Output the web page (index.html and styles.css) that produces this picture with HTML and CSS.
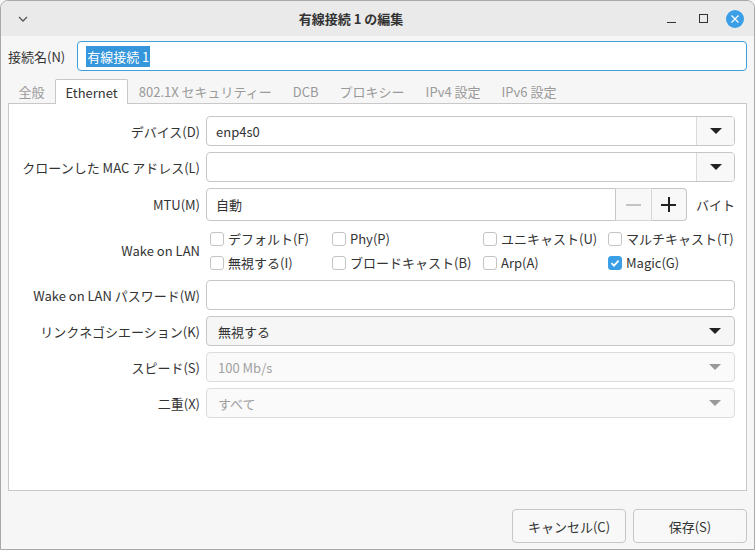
FILE: index.html
```html
<!DOCTYPE html>
<html lang="ja">
<head>
    <meta charset="UTF-8">
    <meta name="viewport" content="width=device-width, initial-scale=1.0">
    <title>有線接続 1 の編集</title>
    <link rel="stylesheet" href="styles.css">
</head>
<body>
    <div class="window">
        <div class="titlebar">
            <div class="tb-left">
                <svg width="10" height="6" viewBox="0 0 10 6"><path d="M1 1 L5 5 L9 1" fill="none" stroke="#555" stroke-width="1.3"/></svg>
            </div>
            <div class="tb-title">有線接続 1 の編集</div>
            <div class="tb-controls">
                <span class="tb-min"></span>
                <span class="tb-max"></span>
                <span class="tb-close">
                    <svg width="18" height="18" viewBox="0 0 18 18"><path d="M5.5 5.5 L12.5 12.5 M12.5 5.5 L5.5 12.5" stroke="#fff" stroke-width="1.2"/></svg>
                </span>
            </div>
        </div>

        <div class="content">
            <div class="name-row">
                <label>接続名(N)</label>
                <div class="entry focused"><span class="selected">有線接続 1</span></div>
            </div>

            <div class="tabs">
                <div class="tab">全般</div>
                <div class="tab active">Ethernet</div>
                <div class="tab">802.1X セキュリティー</div>
                <div class="tab">DCB</div>
                <div class="tab">プロキシー</div>
                <div class="tab">IPv4 設定</div>
                <div class="tab">IPv6 設定</div>
            </div>

            <div class="panel">
                <div class="form">
                    <label class="row-label">デバイス(D)</label>
                    <div class="combo entry-combo">
                        <div class="combo-text">enp4s0</div>
                        <div class="combo-btn"><span class="arrow"></span></div>
                    </div>

                    <label class="row-label">クローンした MAC アドレス(L)</label>
                    <div class="combo entry-combo">
                        <div class="combo-text"></div>
                        <div class="combo-btn"><span class="arrow"></span></div>
                    </div>

                    <label class="row-label">MTU(M)</label>
                    <div class="spin-row">
                        <div class="spin">
                            <div class="spin-text">自動</div>
                            <div class="spin-btn minus"><span></span></div>
                            <div class="spin-btn plus"><span></span><span class="v"></span></div>
                        </div>
                        <span class="unit">バイト</span>
                    </div>

                    <label class="row-label">Wake on LAN</label>
                    <div class="checks">
                        <div class="check"><span class="box"></span>デフォルト(F)</div>
                        <div class="check"><span class="box"></span>Phy(P)</div>
                        <div class="check"><span class="box"></span>ユニキャスト(U)</div>
                        <div class="check"><span class="box"></span>マルチキャスト(T)</div>
                        <div class="check"><span class="box"></span>無視する(I)</div>
                        <div class="check"><span class="box"></span>ブロードキャスト(B)</div>
                        <div class="check"><span class="box"></span>Arp(A)</div>
                        <div class="check"><span class="box checked"><svg width="14" height="14" viewBox="0 0 14 14"><path d="M3.5 7.2 L6 9.6 L10.6 4.6" fill="none" stroke="#fff" stroke-width="1.8"/></svg></span>Magic(G)</div>
                    </div>

                    <label class="row-label">Wake on LAN パスワード(W)</label>
                    <div class="entry plain"></div>

                    <label class="row-label">リンクネゴシエーション(K)</label>
                    <div class="combo button-combo">
                        <div class="combo-text">無視する</div>
                        <span class="arrow"></span>
                    </div>

                    <label class="row-label">スピード(S)</label>
                    <div class="combo button-combo disabled">
                        <div class="combo-text">100 Mb/s</div>
                        <span class="arrow"></span>
                    </div>

                    <label class="row-label">二重(X)</label>
                    <div class="combo button-combo disabled">
                        <div class="combo-text">すべて</div>
                        <span class="arrow"></span>
                    </div>
                </div>
            </div>

            <div class="actions">
                <button class="btn">キャンセル(C)</button>
                <button class="btn">保存(S)</button>
            </div>
        </div>
    </div>
</body>
</html>
```

FILE: styles.css
```css
* {
    box-sizing: border-box;
}

body {
    margin: 0;
    padding: 0;
    font-family: "Noto Sans CJK JP", "Noto Sans", sans-serif;
    font-size: 13px;
    color: #333;
    background-color: #f6f6f6;
}

.window {
    width: 755px;
    height: 550px;
    border: 1px solid #a8a8a8;
    border-radius: 8px 8px 0 0;
    overflow: hidden;
    background-color: #f6f6f6;
    display: flex;
    flex-direction: column;
}

/* title bar */
.titlebar {
    height: 35px;
    flex: none;
    background-color: #eaeaea;
    display: flex;
    align-items: center;
}

.tb-left {
    width: 44px;
    display: flex;
    justify-content: center;
    padding-top: 1px;
}

.tb-title {
    flex: 1;
    text-align: center;
    font-weight: bold;
    color: #333;
}

.tb-controls {
    width: 97px;
    display: flex;
    align-items: center;
    padding-left: 10px;
}

.tb-min {
    width: 9px;
    height: 1px;
    background-color: #333;
    margin-top: 8px;
    margin-right: 23px;
}

.tb-max {
    width: 9px;
    height: 9px;
    border: 1px solid #333;
    margin-right: 18px;
}

.tb-close {
    width: 18px;
    height: 18px;
    border-radius: 50%;
    background-color: #3a9fe6;
    display: flex;
}

/* main content */
.content {
    flex: 1;
    display: flex;
    flex-direction: column;
    padding: 5px 7px 0 7px;
}

.name-row {
    display: flex;
    align-items: center;
    height: 30px;
    gap: 12px;
}

.entry {
    height: 30px;
    border: 1px solid #c6c6c6;
    border-radius: 4px;
    background-color: #fff;
    display: flex;
    align-items: center;
}

.entry.focused {
    flex: 1;
    border-color: #3d9fd9;
    padding-left: 8px;
}

.selected {
    background-color: #3596db;
    color: #fff;
    padding: 1px 1px;
}

/* tabs */
.tabs {
    margin-top: 8px;
    height: 24px;
    display: flex;
    position: relative;
    z-index: 1;
}

.tab {
    padding: 0 9.5px;
    display: flex;
    align-items: center;
    color: #9a9a9a;
    border: 1px solid transparent;
    border-bottom: none;
}

.tab.active {
    color: #333;
    background-color: #fff;
    border-color: #c8c8c8;
    border-radius: 2px 2px 0 0;
    height: 25px;
}

.panel {
    flex: 1;
    background-color: #fff;
    border: 1px solid #c8c8c8;
}

.form {
    display: grid;
    grid-template-columns: 191px 1fr;
    grid-template-rows: 30px 30px 33px 47px 30px 30px 30px 30px;
    column-gap: 6px;
    row-gap: 6px;
    padding: 12px 11px 0 0;
}

.row-label {
    display: flex;
    align-items: center;
    justify-content: flex-end;
    color: #333;
    white-space: nowrap;
}

/* combos */
.combo {
    display: flex;
    align-items: center;
    border: 1px solid #c6c6c6;
    border-radius: 4px;
}

.entry-combo {
    background-color: #fff;
}

.combo-text {
    flex: 1;
    padding-left: 9px;
}

.combo-btn {
    width: 38px;
    height: 100%;
    border-left: 1px solid #dadada;
    background-color: #f8f8f8;
    border-radius: 0 3px 3px 0;
    display: flex;
    align-items: center;
    justify-content: center;
}

.arrow {
    width: 0;
    height: 0;
    border-left: 6px solid transparent;
    border-right: 6px solid transparent;
    border-top: 6px solid #222;
}

.button-combo {
    background-color: #f6f6f6;
    padding-right: 13px;
}

.button-combo .combo-text {
    padding-left: 11px;
}

.button-combo.disabled {
    background-color: #fafafa;
    border-color: #dcdcdc;
    color: #a0a0a0;
}

.button-combo.disabled .arrow {
    border-top-color: #999;
}

/* spin */
.spin-row {
    display: flex;
    align-items: center;
}

.spin {
    display: flex;
    height: 33px;
    flex: 1;
}

.spin-text {
    flex: 1;
    display: flex;
    align-items: center;
    padding-left: 9px;
    border: 1px solid #c6c6c6;
    border-radius: 4px 0 0 4px;
}

.spin-btn {
    width: 36px;
    border: 1px solid #d6d6d6;
    border-left: none;
    background-color: #f8f8f8;
    position: relative;
    display: flex;
    align-items: center;
    justify-content: center;
}

.spin-btn.plus {
    width: 35px;
    border-color: #c6c6c6;
    border-radius: 0 4px 4px 0;
}

.spin-btn span {
    width: 15px;
    height: 2px;
    background-color: #222;
}

.spin-btn.minus span {
    background-color: #c4c4c4;
}

.spin-btn span.v {
    position: absolute;
    width: 2px;
    height: 15px;
}

.unit {
    margin-left: 9px;
    color: #333;
    white-space: nowrap;
}

/* check boxes */
.checks {
    display: grid;
    grid-template-columns: 122px 151px 125px auto;
    grid-template-rows: 23px 23px;
    row-gap: 1px;
    padding-left: 4px;
}

.check {
    display: flex;
    align-items: center;
    gap: 4px;
    color: #333;
    white-space: nowrap;
}

.box {
    width: 14px;
    height: 14px;
    border: 1px solid #c4c4c4;
    border-radius: 3px;
    background-color: #fff;
    display: flex;
}

.box.checked {
    background-color: #3a9fe6;
    border-color: #3a9fe6;
}

.box.checked svg {
    margin: -1px;
}

/* bottom buttons */
.actions {
    display: flex;
    justify-content: flex-end;
    gap: 7px;
    padding: 18px 0 6px 0;
}

.btn {
    width: 114px;
    height: 34px;
    font-family: inherit;
    font-size: 13px;
    color: #333;
    background-color: #f8f8f8;
    border: 1px solid #c6c6c6;
    border-radius: 4px;
}
```
